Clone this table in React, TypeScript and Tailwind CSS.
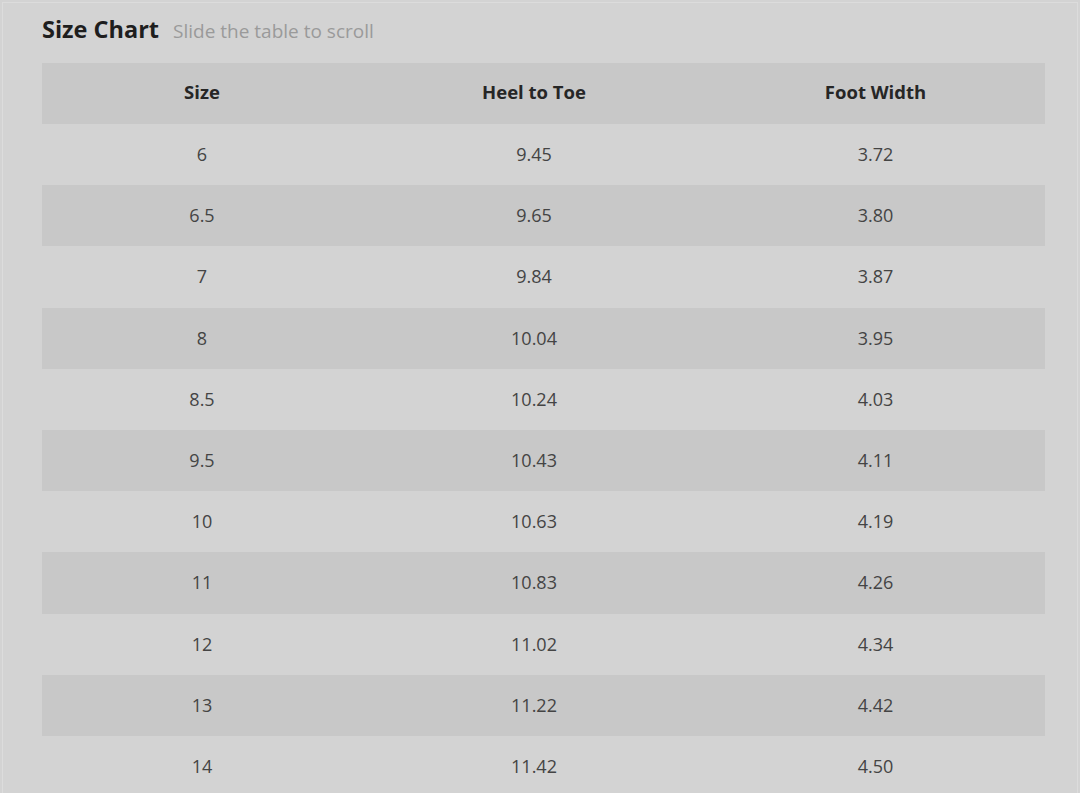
const rows = [
  ["6", "9.45", "3.72"],
  ["6.5", "9.65", "3.80"],
  ["7", "9.84", "3.87"],
  ["8", "10.04", "3.95"],
  ["8.5", "10.24", "4.03"],
  ["9.5", "10.43", "4.11"],
  ["10", "10.63", "4.19"],
  ["11", "10.83", "4.26"],
  ["12", "11.02", "4.34"],
  ["13", "11.22", "4.42"],
  ["14", "11.42", "4.50"],
];

export default function App() {
  return (
    <div className="h-[793px] w-[1080px] overflow-hidden bg-[#d3d3d3] p-[2px] font-['Open_Sans',sans-serif]">
      <div className="h-[800px] border border-[#dcdcdc] pl-[39px] pr-[31px]">
        <div className="flex h-[60px] items-center gap-[14px] pb-[6px]">
          <h2 className="text-[23.5px] font-bold text-[#1e1e1e]">Size Chart</h2>
          <span className="mt-[2px] text-[19px] text-[#9a9a9a]">Slide the table to scroll</span>
        </div>
        <div className="w-[1003px]">
          <div className="grid h-[61px] grid-cols-[320px_344px_339px] items-center bg-[#c8c8c8] pb-[3px] text-[18.5px] font-bold text-[#262626]">
            <div className="text-center">Size</div>
            <div className="text-center">Heel to Toe</div>
            <div className="text-center">Foot Width</div>
          </div>
          {rows.map((r, i) => (
            <div
              key={i}
              className={
                "grid h-[61.2px] grid-cols-[320px_344px_339px] items-center text-[18px] text-[#444444] " +
                (i % 2 === 1 ? "bg-[#c8c8c8]" : "bg-[#d3d3d3]")
              }
            >
              {r.map((c, j) => (
                <div key={j} className="text-center">
                  {c}
                </div>
              ))}
            </div>
          ))}
        </div>
      </div>
    </div>
  );
}
